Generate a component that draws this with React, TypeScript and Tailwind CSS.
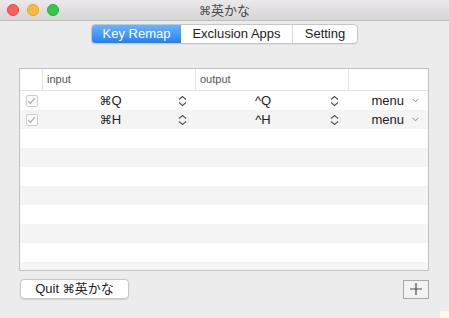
import React from "react";

const font = { fontFamily: '"Liberation Sans", "Noto Sans CJK JP", sans-serif' };

function Cmd() {
  return <span className="font-['DejaVu_Sans'] text-[12px]">⌘</span>;
}

function Stepper() {
  return (
    <svg width="9" height="12" viewBox="0 0 9 12" className="shrink-0">
      <path d="M1 4.5 L4.5 1.5 L8 4.5" fill="none" stroke="#555" strokeWidth="1.1" />
      <path d="M1 7.5 L4.5 10.5 L8 7.5" fill="none" stroke="#555" strokeWidth="1.1" />
    </svg>
  );
}

function Check() {
  return (
    <div className="w-[12px] h-[12px] border border-[#cfcfcf] rounded-[2px] bg-[#fafafa] flex items-center justify-center">
      <svg width="9" height="8" viewBox="0 0 9 8">
        <path d="M1.2 4.2 L3.4 6.4 L7.8 1.2" fill="none" stroke="#a8a8a8" strokeWidth="1.2" />
      </svg>
    </div>
  );
}

function Row({ input, output, gray }: { input: string; output: string; gray: boolean }) {
  return (
    <div className={`flex h-[19px] shrink-0 items-center text-[13px] text-[#222] ${gray ? "bg-[#f4f4f4]" : "bg-white"}`}>
      <div className="w-[23px] flex justify-center">
        <Check />
      </div>
      <div className="w-[153px] flex items-center pr-[9px]">
        <div className="flex-1 text-center">
          <Cmd />
          {input}
        </div>
        <Stepper />
      </div>
      <div className="w-[153px] flex items-center pr-[10px]">
        <div className="flex-1 text-center">{output}</div>
        <Stepper />
      </div>
      <div className="flex-1 flex items-center justify-end pr-[9px] gap-[8px]">
        <span>menu</span>
        <svg width="7" height="5" viewBox="0 0 7 5">
          <path d="M0.8 1 L3.5 3.8 L6.2 1" fill="none" stroke="#8a8a8a" strokeWidth="1" />
        </svg>
      </div>
    </div>
  );
}

export default function App() {
  const emptyRows = Array.from({ length: 9 });
  return (
    <div className="relative w-[449px] h-[318px] bg-[#ececec] flex flex-col overflow-hidden" style={font}>
      {/* title bar */}
      <div className="h-[21px] shrink-0 flex items-center relative bg-gradient-to-b from-[#ebe9eb] to-[#d6d5d6] border-b border-[#bdbdbd]">
        <div className="absolute left-[7px] top-[4px] flex gap-[8px]">
          <div className="w-[12px] h-[12px] rounded-full bg-[#fc605c] border border-[#e2463f]" />
          <div className="w-[12px] h-[12px] rounded-full bg-[#fdbc40] border border-[#e1a116]" />
          <div className="w-[12px] h-[12px] rounded-full bg-[#34c84a] border border-[#2dac2f]" />
        </div>
        <div className="flex-1 text-center text-[13px] text-[#4a4a4a] leading-none">
          <Cmd />英かな
        </div>
      </div>

      {/* segmented control */}
      <div className="flex justify-center mt-[3px]">
        <div className="flex h-[20px] rounded-[4px] border border-[#c6c6c6] bg-white text-[13px] text-[#222] overflow-hidden shadow-[0_0.5px_0_rgba(0,0,0,0.1)]">
          <div className="w-[89px] flex items-center justify-center text-white bg-gradient-to-b from-[#6cb3fa] to-[#1b80fa]">
            Key Remap
          </div>
          <div className="w-[112px] flex items-center justify-center border-r border-[#dcdcdc]">Exclusion Apps</div>
          <div className="w-[64px] flex items-center justify-center">Setting</div>
        </div>
      </div>

      {/* table */}
      <div className="ml-[19px] mt-[24px] w-[410px] h-[203px] shrink-0 border border-[#c2c2c2] bg-white overflow-hidden flex flex-col">
        <div className="h-[22px] shrink-0 flex border-b border-[#e2e2e2] text-[11px] text-[#555]">
          <div className="w-[23px] border-r border-[#e4e4e4]" />
          <div className="w-[153px] border-r border-[#e4e4e4] pl-[4px] flex items-center">input</div>
          <div className="w-[153px] border-r border-[#e4e4e4] pl-[4px] flex items-center">output</div>
          <div className="flex-1" />
        </div>
        <Row input="Q" output="^Q" gray={false} />
        <Row input="H" output="^H" gray={true} />
        {emptyRows.map((_, i) => (
          <div key={i} className={`h-[19px] shrink-0 ${i % 2 === 0 ? "bg-white" : "bg-[#f4f4f4]"}`} />
        ))}
      </div>

      {/* bottom buttons */}
      <div className="flex justify-between items-center ml-[20px] mr-[20px] mt-[8px]">
        <div className="w-[109px] h-[20px] rounded-[4px] bg-white border border-[#c8c8c8] shadow-[0_0.5px_1px_rgba(0,0,0,0.12)] flex items-center justify-center text-[13px] text-[#222]">
          Quit&nbsp;<Cmd />英かな
        </div>
        <div className="w-[26px] h-[19px] border border-[#a9a9a9] bg-[#f2f2f2] flex items-center justify-center">
          <svg width="14" height="14" viewBox="0 0 14 14">
            <path d="M7 1 V13 M1 7 H13" stroke="#4a4a4a" strokeWidth="1.2" />
          </svg>
        </div>
      </div>

      <div className="absolute right-0 bottom-0 w-[9px] h-[7px] bg-[#fdfbe2]" />
    </div>
  );
}
